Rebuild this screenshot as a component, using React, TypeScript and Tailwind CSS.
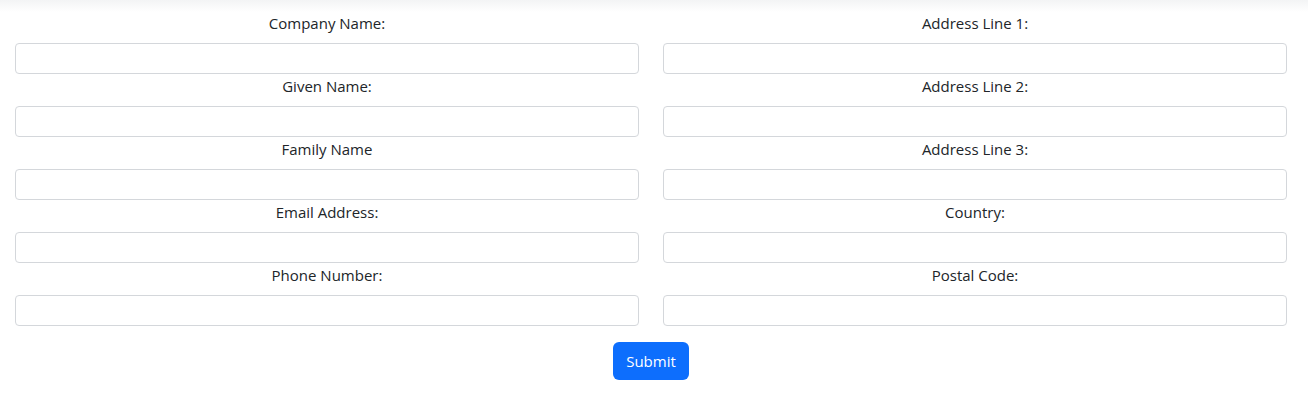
const left = ['Company Name:', 'Given Name:', 'Family Name', 'Email Address:', 'Phone Number:'];
const right = ['Address Line 1:', 'Address Line 2:', 'Address Line 3:', 'Country:', 'Postal Code:'];

function Field({ label }: { label: string }) {
  return (
    <div className="flex flex-col mb-px">
      <label className="h-6 leading-[22px] text-center">{label}</label>
      <input className="mt-[7px] h-[31px] w-full rounded border border-[#d4d7db] bg-white px-3 outline-none" />
    </div>
  );
}

export default function App() {
  return (
    <div
      className="relative min-h-screen bg-white text-[15px] text-[#212529]"
      style={{ fontFamily: '"Open Sans", "Noto Sans", sans-serif' }}
    >
      <div className="h-3 bg-gradient-to-b from-[#f3f4f5] to-white" />
      <form className="pl-[15px] pr-[21px]">
        <div className="flex gap-6">
          <div className="flex-1">
            {left.map((l) => (
              <Field key={l} label={l} />
            ))}
          </div>
          <div className="flex-1">
            {right.map((l) => (
              <Field key={l} label={l} />
            ))}
          </div>
        </div>
        <div className="flex justify-center mt-[15px]">
          <button
            type="button"
            className="h-[38px] w-[76px] rounded-md bg-[#0d6efd] text-white text-[15px]"
          >
            Submit
          </button>
        </div>
      </form>
    </div>
  );
}
